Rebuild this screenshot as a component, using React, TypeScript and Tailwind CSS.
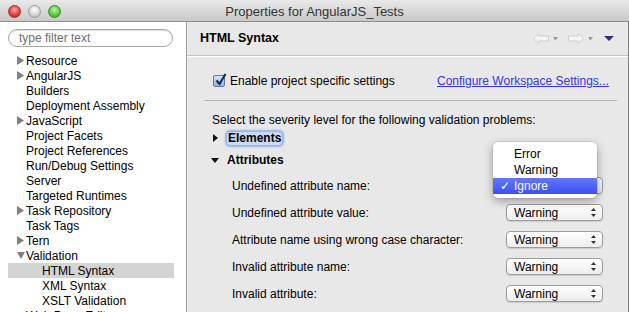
const tree = [
  { label: "Resource", arrow: "right" },
  { label: "AngularJS", arrow: "right" },
  { label: "Builders" },
  { label: "Deployment Assembly" },
  { label: "JavaScript", arrow: "right" },
  { label: "Project Facets" },
  { label: "Project References" },
  { label: "Run/Debug Settings" },
  { label: "Server" },
  { label: "Targeted Runtimes" },
  { label: "Task Repository", arrow: "right" },
  { label: "Task Tags" },
  { label: "Tern", arrow: "right" },
  { label: "Validation", arrow: "down" },
  { label: "HTML Syntax", child: true, selected: true },
  { label: "XML Syntax", child: true },
  { label: "XSLT Validation", child: true },
  { label: "Web Page Editor" },
];

const rows = [
  "Undefined attribute name:",
  "Undefined attribute value:",
  "Attribute name using wrong case character:",
  "Invalid attribute name:",
  "Invalid attribute:",
];

function TreeArrow({ dir }: { dir?: string }) {
  return (
    <span className="w-[9px] h-[15px] flex items-center shrink-0">
      {dir === "right" && (
        <svg width="8" height="9" viewBox="0 0 8 9">
          <polygon points="0,0 7,4.5 0,9" fill="#7f7f7f" />
        </svg>
      )}
      {dir === "down" && (
        <svg width="8" height="8" viewBox="0 0 8 8">
          <polygon points="0,0 8,0 4,7" fill="#7f7f7f" />
        </svg>
      )}
    </span>
  );
}

// the first one sits under the open menu, so its label is covered
function Select({ covered }: { covered?: boolean }) {
  return (
    <div className="w-[97px] h-[17px] rounded-[4px] border border-[#9c9c9c] bg-gradient-to-b from-white to-[#ededed] shadow-[0_1px_1px_rgba(0,0,0,0.12)] flex items-center pl-[7px] pr-[6px]">
      <span className="flex-1 leading-none">{covered ? "" : "Warning"}</span>
      <svg width="5" height="9" viewBox="0 0 5 9">
        <polygon points="2.5,0 5,3 0,3" fill="#333" />
        <polygon points="0,6 5,6 2.5,9" fill="#333" />
      </svg>
    </div>
  );
}

export default function App() {
  return (
    <div className="w-[629px] h-[312px] overflow-hidden flex flex-col bg-white text-[12px] text-black font-['Liberation_Sans',Arial,sans-serif]">
      {/* Title bar */}
      <div className="h-[22px] shrink-0 relative flex items-center justify-center bg-gradient-to-b from-[#e9e9e9] to-[#c9c9c9] border-b border-[#8f8f8f]">
        <div className="absolute left-[8px] top-[5px] flex gap-[7px]">
          <span className="w-[13px] h-[13px] rounded-full border border-[#a3302b] bg-[radial-gradient(circle_at_50%_35%,#ffb2ab,#e8403a_55%,#b81d18)]" />
          <span className="w-[13px] h-[13px] rounded-full border border-[#9b9b9b] bg-[radial-gradient(circle_at_50%_35%,#ffffff,#d6d6d6_55%,#acacac)]" />
          <span className="w-[13px] h-[13px] rounded-full border border-[#3c8a2c] bg-[radial-gradient(circle_at_50%_35%,#c6f5b0,#5ccb3e_55%,#2f9b1e)]" />
        </div>
        <span className="text-[13px] text-[#333] pt-[2px]">Properties for AngularJS_Tests</span>
      </div>

      <div className="flex flex-1 min-h-0">
        {/* Left tree */}
        <aside className="w-[187px] shrink-0 bg-white border-r border-[#a2a2a2] flex flex-col">
          <div className="mt-[7px] ml-[8px] w-[165px] h-[18px] rounded-full border border-[#a8a8a8] shadow-[inset_0_1px_1px_rgba(0,0,0,0.15)] flex items-center pl-[10px] text-[#6f6f6f]">
            type filter text
          </div>
          <ul className="mt-[6px]">
            {tree.map((item) => (
              <li
                key={item.label}
                className={`h-[15px] flex items-center ml-[8px] w-[166px] ${item.child ? "pl-[25px]" : "pl-[9px]"} ${item.selected ? "bg-[#d4d4d4]" : ""}`}
              >
                <TreeArrow dir={item.arrow} />
                <span className="leading-none whitespace-nowrap">{item.label}</span>
              </li>
            ))}
          </ul>
        </aside>

        {/* Right page */}
        <main className="flex-1 relative bg-[#e8e8e8] border-r border-[#7e7e7e] flex flex-col">
          <div className="h-[34px] shrink-0 flex items-center pl-[13px] pr-[14px] border-b border-[#c2c2c2]">
            <span className="font-bold text-[12.5px] flex-1">HTML Syntax</span>
            <div className="flex items-center gap-[2px]">
              <svg width="16" height="11" viewBox="0 0 16 11">
                <path d="M0.5,5.5 L6,0.5 L6,3 L15.5,3 L15.5,8 L6,8 L6,10.5 Z" fill="#f4f4f4" stroke="#cfcfcf" />
              </svg>
              <svg width="9" height="4" viewBox="0 0 9 4" className="mr-[6px]">
                <polygon points="2,0 7,0 4.5,3.5" fill="#9a9a9a" />
              </svg>
              <svg width="16" height="11" viewBox="0 0 16 11">
                <path d="M15.5,5.5 L10,0.5 L10,3 L0.5,3 L0.5,8 L10,8 L10,10.5 Z" fill="#f4f4f4" stroke="#cfcfcf" />
              </svg>
              <svg width="9" height="4" viewBox="0 0 9 4" className="mr-[7px]">
                <polygon points="2,0 7,0 4.5,3.5" fill="#9a9a9a" />
              </svg>
              <svg width="10" height="6" viewBox="0 0 10 6">
                <polygon points="0,0 10,0 5,5" fill="#3b2c72" />
              </svg>
            </div>
          </div>
          <div className="h-px bg-white" />

          <div className="mt-[14px] h-[20px] flex items-center pl-[26px]">
            <div className="w-[224px] flex items-center">
              <span className="w-[12px] h-[12px] rounded-[2px] border border-[#5f77a6] bg-gradient-to-b from-[#d9e6fb] to-[#8fb1ea] relative mr-[5px]">
                <svg width="12" height="13" viewBox="0 0 12 13" className="absolute left-[1px] top-[-3px]">
                  <path d="M1.5,7.5 L4.5,11 L10.5,1" fill="none" stroke="#1b2a4a" strokeWidth="2.2" />
                </svg>
              </span>
              <span>Enable project specific settings</span>
            </div>
            <span className="text-[#3636e6] underline">Configure Workspace Settings...</span>
          </div>

          <div className="mt-[9px] ml-[18px] mr-[11px] h-px bg-[#b3b3b3]" />

          <div className="mt-[11px] h-[16px] flex items-center pl-[25px]">
            Select the severity level for the following validation problems:
          </div>

          <div className="mt-[2px] h-[16px] flex items-center pl-[26px]">
            <svg width="5" height="8" viewBox="0 0 5 8" className="mr-[9px]">
              <polygon points="0,0 5,4 0,8" fill="#111" />
            </svg>
            <span className="font-bold px-[1px] rounded-[3px] bg-[#cbdaf3] shadow-[0_0_2px_2px_#93b3e9] leading-[13px]">Elements</span>
          </div>

          <div className="mt-[6px] h-[16px] flex items-center pl-[24px]">
            <svg width="8" height="5" viewBox="0 0 8 5" className="mr-[8px]">
              <polygon points="0,0 8,0 4,5" fill="#111" />
            </svg>
            <span className="font-bold">Attributes</span>
          </div>

          <div className="mt-[4px] flex flex-col">
            {rows.map((r, i) => (
              <div key={r} className="h-[27px] flex items-center pl-[45px]">
                <span className="w-[274px]">{r}</span>
                <Select covered={i === 0} />
              </div>
            ))}
          </div>

          {/* Open popup menu */}
          <div className="absolute left-[306px] top-[120px] w-[104px] py-[4px] bg-white rounded-[5px] shadow-[0_3px_10px_rgba(0,0,0,0.35),0_0_0_1px_rgba(0,0,0,0.06)]">
            <div className="h-[16px] flex items-center pl-[21px]">Error</div>
            <div className="h-[16px] flex items-center pl-[21px]">Warning</div>
            <div className="h-[16px] flex items-center pl-[7px] text-white bg-gradient-to-b from-[#6477fb] to-[#3c4ff3]">
              <span className="w-[14px]">✓</span>
              <span>Ignore</span>
            </div>
          </div>
        </main>
      </div>
    </div>
  );
}
